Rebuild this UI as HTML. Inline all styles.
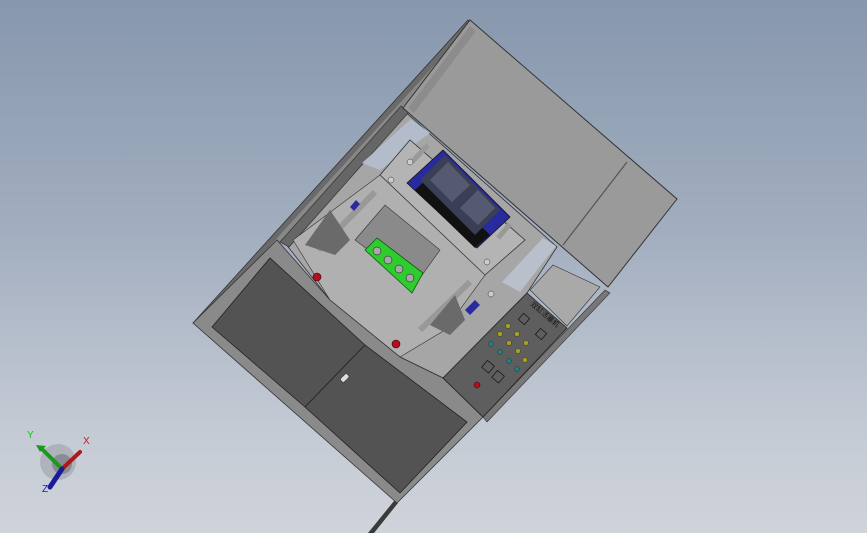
<!DOCTYPE html>
<html><head><meta charset="utf-8"><style>
html,body{margin:0;padding:0;width:867px;height:533px;overflow:hidden}
body{background:linear-gradient(180deg,#8797ad 0%,#a3afc0 45%,#c4cad4 80%,#cfd3da 100%)}
svg{position:absolute;left:0;top:0}
</style></head><body>
<svg width="867" height="533" viewBox="0 0 867 533" xmlns="http://www.w3.org/2000/svg" font-family="Liberation Sans, sans-serif">
<!-- shadow streak -->
<polygon points="368,533 374,533 398,503 394,501" fill="#3a3a3a"/>
<!-- left outer frame strip -->
<polygon points="193,323 468,20 476,25 202,328" fill="#6a6a6a" stroke="#333" stroke-width="0.8"/>
<polygon points="198,325 470,26 473,29 202,328" fill="#888"/>
<!-- middle body -->
<polygon points="285,243 403,110 557,247 527,293 443,378 400,357 330,300" fill="#a6a6a6" stroke="#333" stroke-width="0.8"/>
<!-- inner frame strip -->
<polygon points="280,242 401,106 409,112 289,247" fill="#666" stroke="#333" stroke-width="0.7"/>
<!-- gaps showing background -->
<polygon points="411,119 430,133 380,170 362,163" fill="#b3bccb"/>
<polygon points="502,282 543,238 556,246 520,292" fill="#b9c0cc"/>
<!-- plate -->
<polygon points="380,175 410,140 525,240 485,275" fill="#b4b4b4" stroke="#333" stroke-width="0.8"/>
<polygon points="293,240 380,175 485,275 445,330 400,357 330,300" fill="#b0b0b0" stroke="#333" stroke-width="0.6"/>
<!-- cylinders -->
<line x1="318" y1="250" x2="375" y2="192" stroke="#999" stroke-width="6"/>
<line x1="420" y1="330" x2="470" y2="282" stroke="#999" stroke-width="6"/>
<line x1="412" y1="162" x2="428" y2="145" stroke="#999" stroke-width="5"/>
<line x1="498" y1="238" x2="510" y2="224" stroke="#999" stroke-width="5"/>
<polygon points="305,245 330,210 350,240 335,255" fill="#6a6a6a"/>
<polygon points="430,325 455,295 465,320 450,335" fill="#6a6a6a"/>
<!-- blue block -->
<polygon points="407,183 443,150 510,217 477,248" fill="#2a2aa0" stroke="#111" stroke-width="0.8"/>
<polygon points="415,190 430,176 490,235 475,248" fill="#111"/>
<polygon points="420,180 445,155 500,210 475,235" fill="#3a3f55"/>
<polygon points="430,180 448,162 470,185 452,202" fill="#555a70"/>
<polygon points="460,208 478,190 495,208 478,225" fill="#555a70"/>
<!-- carriage -->
<polygon points="355,240 385,205 440,250 415,285" fill="#8a8a8a" stroke="#333" stroke-width="0.6"/>
<!-- green part -->
<polygon points="365,250 377,238 423,273 412,293" fill="#2ecc2e" stroke="#0a5a0a" stroke-width="0.8"/>
<circle cx="377" cy="251" r="4" fill="#a8a8a8" stroke="#111" stroke-width="0.5"/>
<circle cx="388" cy="260" r="4" fill="#a8a8a8" stroke="#111" stroke-width="0.5"/>
<circle cx="399" cy="269" r="4" fill="#a8a8a8" stroke="#111" stroke-width="0.5"/>
<circle cx="410" cy="278" r="4" fill="#a8a8a8" stroke="#111" stroke-width="0.5"/>
<!-- small blue parts -->
<polygon points="350,207 356,200 360,204 354,211" fill="#2a2aa0"/>
<polygon points="465,310 475,300 480,305 470,315" fill="#2a2aa0"/>
<!-- bolts -->
<circle cx="410" cy="162" r="3" fill="#ccc" stroke="#333" stroke-width="0.5"/>
<circle cx="391" cy="180" r="3" fill="#ccc" stroke="#333" stroke-width="0.5"/>
<circle cx="487" cy="262" r="3" fill="#ccc" stroke="#333" stroke-width="0.5"/>
<circle cx="491" cy="294" r="3" fill="#ccc" stroke="#333" stroke-width="0.5"/>
<!-- red buttons -->
<circle cx="317" cy="277" r="4" fill="#b01020" stroke="#300" stroke-width="0.6"/>
<circle cx="396" cy="344" r="4" fill="#b01020" stroke="#300" stroke-width="0.6"/>
<!-- lower cabinet -->
<polygon points="193,323 277,240 330,300 400,357 443,378 483,417 397,503" fill="#8a8a8a" stroke="#333" stroke-width="0.8"/>
<polygon points="212,327 270,258 365,345 305,407" fill="#535353" stroke="#222" stroke-width="0.8"/>
<polygon points="305,407 365,345 467,422 400,493" fill="#535353" stroke="#222" stroke-width="0.8"/>
<rect x="340" y="376" width="9" height="5" rx="2" fill="#ddd" stroke="#222" stroke-width="0.5" transform="rotate(-45 344 378)"/>
<!-- right frame strip -->
<polygon points="483,417 605,290 610,293 487,422" fill="#777" stroke="#333" stroke-width="0.6"/>
<!-- control panel -->
<polygon points="443,378 527,293 567,328 483,417" fill="#5e5e5e" stroke="#222" stroke-width="0.8"/>
<polygon points="530,290 553,265 600,287 567,326" fill="#a9a9a9" stroke="#333" stroke-width="0.6"/>
<text x="530" y="305" font-size="7" fill="#111" transform="rotate(40 530 305)" font-family="Liberation Sans, Noto Sans CJK SC, sans-serif">双缸活塞机</text>
<g fill="#a8a020" stroke="#222" stroke-width="0.4">
<circle cx="508" cy="326" r="2.5"/><circle cx="517" cy="334" r="2.5"/><circle cx="500" cy="334" r="2.5"/><circle cx="509" cy="343" r="2.5"/><circle cx="518" cy="351" r="2.5"/><circle cx="526" cy="343" r="2.5"/><circle cx="525" cy="360" r="2.5"/></g>
<g fill="#208080" stroke="#222" stroke-width="0.4">
<circle cx="491" cy="344" r="2.5"/><circle cx="500" cy="352" r="2.5"/><circle cx="509" cy="361" r="2.5"/><circle cx="517" cy="369" r="2.5"/></g>
<rect x="520" y="315" width="8" height="8" fill="none" stroke="#111" stroke-width="0.7" transform="rotate(40 524 319)"/>
<rect x="537" y="330" width="8" height="8" fill="none" stroke="#111" stroke-width="0.7" transform="rotate(40 541 334)"/>
<rect x="484" y="362" width="9" height="9" fill="none" stroke="#111" stroke-width="0.7" transform="rotate(40 488 366)"/>
<rect x="494" y="372" width="9" height="9" fill="none" stroke="#111" stroke-width="0.7" transform="rotate(40 498 376)"/>
<circle cx="477" cy="385" r="3" fill="#b01020" stroke="#300" stroke-width="0.5"/>
<!-- lid -->
<polygon points="470,20 677,199 608,287 403,108" fill="#9a9a9a" stroke="#333" stroke-width="1"/>
<line x1="627" y1="162" x2="563" y2="245" stroke="#555" stroke-width="1.2"/>
<polygon points="408,108 470,26 476,31 414,113" fill="#8c8c8c"/>
<!-- triad -->
<circle cx="58" cy="462" r="18" fill="#9ea2a8" opacity="0.6"/>
<circle cx="62" cy="464" r="10" fill="#6e7278" opacity="0.6"/>
<line x1="62" y1="469" x2="80" y2="452" stroke="#b01818" stroke-width="4" stroke-linecap="round"/>
<line x1="62" y1="469" x2="42" y2="449" stroke="#1a9a1a" stroke-width="4"/>
<polygon points="36,445 46,446 40,452" fill="#1a9a1a"/>
<line x1="62" y1="469" x2="50" y2="487" stroke="#1a1a9a" stroke-width="5" stroke-linecap="round"/>
<text x="83" y="444" font-size="10" fill="#d01818">X</text>
<text x="27" y="438" font-size="10" fill="#18c018">Y</text>
<text x="42" y="492" font-size="10" fill="#1818e0">Z</text>
</svg>
</body></html>
